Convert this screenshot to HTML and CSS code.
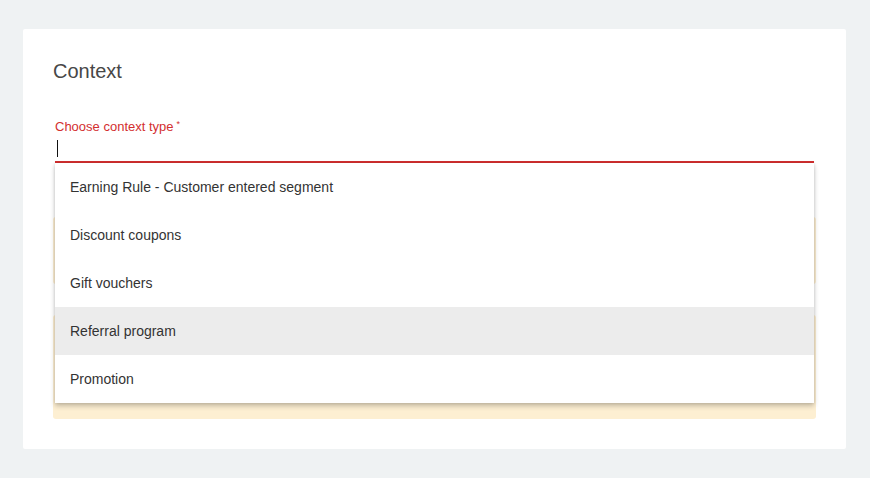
FILE: index.html
```html
<!DOCTYPE html>
<html lang="en">
<head>
<meta charset="utf-8">
<title>Context</title>
<link rel="stylesheet" href="styles.css">
</head>
<body>
<div class="page">
  <section class="card">
    <h2 class="title">Context</h2>
    <div class="field">
      <label class="label">Choose context type<sup class="req">*</sup></label>
      <div class="input"><span class="caret"></span></div>
      <ul class="menu">
        <li class="item">Earning Rule - Customer entered segment</li>
        <li class="item">Discount coupons</li>
        <li class="item">Gift vouchers</li>
        <li class="item active">Referral program</li>
        <li class="item">Promotion</li>
      </ul>
    </div>
    <div class="alert alert-first"></div>
    <div class="alert alert-second"></div>
  </section>
</div>
</body>
</html>
```

FILE: styles.css
```css
html, body {
  margin: 0;
  padding: 0;
  background: #eff2f3;
  font-family: "Liberation Sans", Arial, sans-serif;
}

.page {
  padding: 29px 24px 29px 23px;
}

.card {
  background: #ffffff;
  border-radius: 2px;
  padding: 30px 30px 30px;
}

.title {
  margin: 0;
  font-size: 20px;
  line-height: 24px;
  font-weight: normal;
  color: #474747;
}

.field {
  position: relative;
  margin: 36px 2px 0;
}

.label {
  display: block;
  font-size: 13px;
  line-height: 16px;
  color: #d32f2f;
}

.req {
  font-size: 9px;
  vertical-align: top;
  line-height: 10px;
  margin-left: 3px;
}

.input {
  height: 26px;
  border-bottom: 2px solid #d32f2f;
  box-sizing: content-box;
  padding-left: 2px;
}

.caret {
  display: inline-block;
  width: 1px;
  height: 17px;
  margin-top: 5px;
  background: #111111;
}

.menu {
  position: absolute;
  top: 100%;
  left: 0;
  right: 0;
  margin: 0;
  padding: 0;
  list-style: none;
  background: #ffffff;
  z-index: 2;
  box-shadow: 0 3px 5px rgba(0, 0, 0, 0.22), 0 0 3px rgba(0, 0, 0, 0.12);
}

.item {
  height: 48px;
  line-height: 48px;
  padding: 0 15px;
  font-size: 14px;
  color: #333333;
}

.item.active {
  background: #ececec;
}

.alert {
  background: #fdefd2;
  border-radius: 3px;
}

.alert-first {
  margin-top: 54px;
  height: 67px;
}

.alert-second {
  margin-top: 31px;
  height: 104px;
}
```
